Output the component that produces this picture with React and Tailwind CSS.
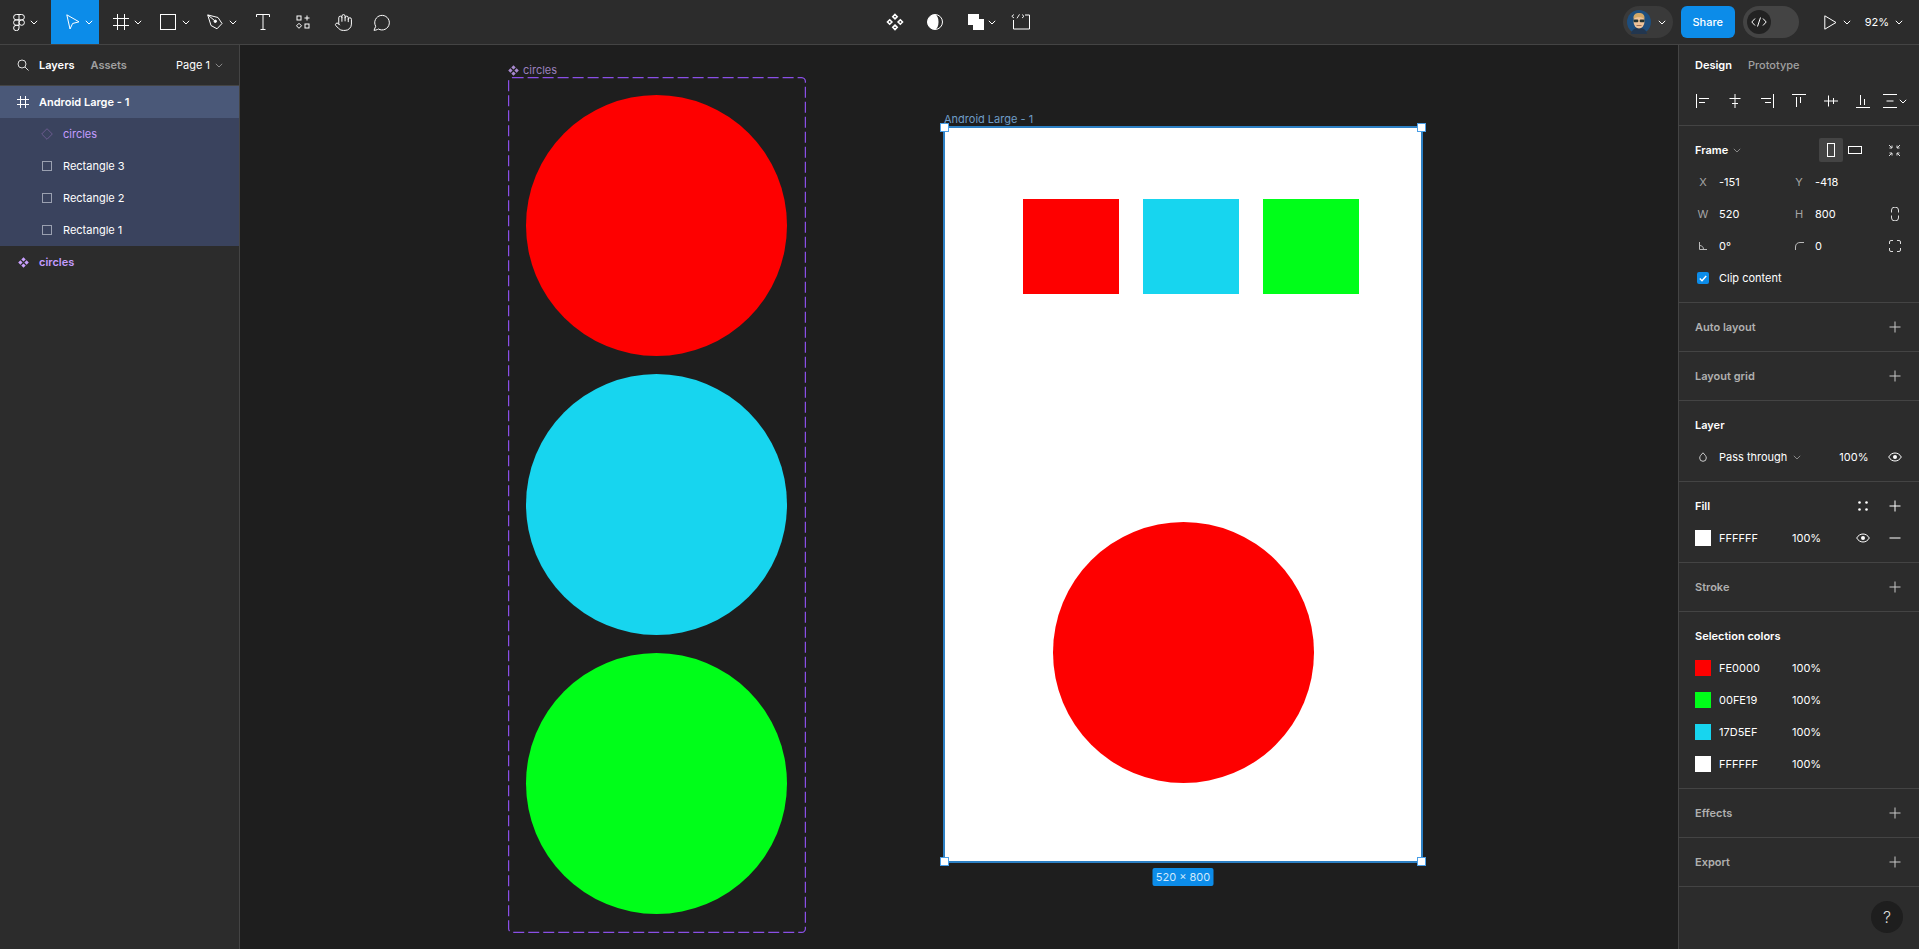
import React from "react";
import { Hand } from "lucide-react";

const Chev = ({ c = "#fff", className = "" }) => (
  <svg width="8" height="5" viewBox="0 0 8 5" fill="none" className={className}>
    <path d="M.8.8 4 4 7.2.8" stroke={c} strokeWidth="1" />
  </svg>
);

const Ico = ({ w = 16, h = 16, children, className = "", vb }) => (
  <svg width={w} height={h} viewBox={vb || `0 0 ${w} ${h}`} fill="none" stroke="#fff" strokeWidth="1" className={`shrink-0 ${className}`}>
    {children}
  </svg>
);

const Plus = ({ dim }) => (
  <Ico w={12} h={12}><path d="M6 .5v11M.5 6h11" stroke={dim ? "#c8c8c8" : "#fff"} /></Ico>
);

const Eye = () => (
  <Ico w={14} h={10}>
    <path d="M.7 5C2.2 2.4 4.4 1 7 1s4.8 1.4 6.3 4C11.8 7.6 9.6 9 7 9S2.200 7.600.7 5Z" />
    <circle cx="7" cy="5" r="2" fill="#fff" stroke="none" />
  </Ico>
);

const Diamonds = ({ c = "#c9a0ff", s = 11 }) => (
  <svg width={s} height={s} viewBox="0 0 11 11" fill={c} className="shrink-0">
    <path d="M5.500.2 7.700 2.400 5.500 4.600 3.300 2.400ZM2.400 3.300 4.600 5.500 2.400 7.700.2 5.500ZM8.600 3.300 10.800 5.500 8.600 7.700 6.400 5.500ZM5.500 6.400 7.700 8.600 5.500 10.800 3.300 8.600Z" />
  </svg>
);

const Tool = ({ w, active, chev, children, ml = "ml-1", pl = "" }) => (
  <div className={`h-[44px] flex items-center justify-center ${w} ${pl} ${active ? "bg-[#0c8ce9]" : ""}`}>
    {children}
    {chev && <Chev className={ml} />}
  </div>
);

function TopBar() {
  return (
    <header className="h-[45px] shrink-0 bg-[#2c2c2c] border-b border-[#444] flex items-center">
      <div className="w-[560px] flex items-center">
        <Tool w="w-[51px]" chev ml="ml-[5px]">
          <Ico w={12} h={17}>
            <path d="M6 .5H3.300a2.700 2.700 0 0 0 0 5.400H6V.5ZM6 .5h2.700a2.700 2.700 0 0 1 0 5.400H6M6 5.900H3.300a2.700 2.700 0 0 0 0 5.400H6V5.900Z" />
            <circle cx="8.700" cy="8.600" r="2.700" />
            <path d="M6 11.300v2.700a2.700 2.700 0 1 1-2.700-2.700H6Z" />
          </Ico>
        </Tool>
        <Tool w="w-[48px]" active chev ml="ml-[5px]" pl="pl-[8px]">
          <Ico w={14} h={16}>
            <path d="M.8.800 13 7.800 6.600 9.500 4 15Z" />
          </Ico>
        </Tool>
        <Tool w="w-[48px]" chev ml="ml-[5px]" pl="pl-[8px]">
          <Ico w={16} h={16}>
            <path d="M4.500 0v16M11.500 0v16M0 4.500h16M0 11.500h16" />
          </Ico>
        </Tool>
        <Tool w="w-[48px]" chev ml="ml-[6px]" pl="pl-[8px]">
          <Ico w={16} h={16}><rect x=".5" y=".5" width="15" height="15" /></Ico>
        </Tool>
        <Tool w="w-[48px]" chev ml="ml-[6px]" pl="pl-[5px]">
          <Ico w={16} h={16}>
            <path d="M.7.900 11 3.500 15 9.500 10 14.800 4 11.500Z" />
            <circle cx="8.300" cy="7.300" r="1.200" fill="#fff" />
            <path d="M.9 1 7.500 6.500" />
          </Ico>
        </Tool>
        <Tool w="w-[40px]">
          <Ico w={14} h={16}><path d="M.5 3V.5h13V3M7 .5v15M4.500 15.500h5" /></Ico>
        </Tool>
        <Tool w="w-[40px]">
          <Ico w={14} h={14}>
            <rect x="1" y="1" width="4" height="4" />
            <path d="M11 .5v5M8.500 3h5" />
            <path d="M3 8.300 5.500 10.800 3 13.300.5 10.800Z" />
            <rect x="9" y="9" width="4" height="4" />
          </Ico>
        </Tool>
        <Tool w="w-[40px]"><Hand size={19} color="#fff" strokeWidth={1.25} /></Tool>
        <Tool w="w-[38px]">
          <Ico w={18} h={17}>
            <path d="M1 16.300 2.700 12.300A7.300 7.300 0 1 1 5.400 15 7.300 7.300 0 0 1 4.500 15.500C3.500 16 2 16.300 1 16.300Z" />
          </Ico>
        </Tool>
      </div>

      <div className="ml-[317px] flex items-center">
        <div className="w-[36px] flex justify-center">
          <svg width="18" height="18" viewBox="0 0 18 18" fill="none" stroke="#fff" strokeWidth="1.600">
            <path d="M9 1.500 11.200 3.700 9 5.900 6.800 3.700ZM3.700 6.800 5.900 9 3.700 11.200 1.500 9ZM14.300 6.800 16.500 9 14.300 11.200 12.100 9ZM9 12.100 11.200 14.300 9 16.500 6.800 14.300Z" />
          </svg>
        </div>
        <div className="w-[39px] flex justify-center ml-[2px]">
          <svg width="16" height="16" viewBox="0 0 16 16" fill="none" stroke="#fff">
            <circle cx="8" cy="8" r="7.500" />
            <path d="M8 .5a7.500 7.500 0 0 0 0 15c2.500-1 3.500-4 3.500-7.500S10.500 1.500 8 .5Z" fill="#fff" stroke="none" />
          </svg>
        </div>
        <div className="ml-[14px] flex items-center">
          <svg width="16" height="16" viewBox="0 0 16 16" fill="#fff">
            <path d="M0 0h11v5h5v11H5v-5H0Z" />
          </svg>
          <Chev className="ml-[4px]" />
        </div>
        <div className="ml-[15px]">
          <svg width="19" height="16" viewBox="0 0 19 16" fill="none" stroke="#fff">
            <path d="M14 1h4.500v14H2.500V6" />
            <path d="M3 .5 .8 2.300 3 4M11 .5 13 2.300 11 4M8.500.3 6 4.300" strokeWidth=".9" />
          </svg>
        </div>
      </div>

      <div className="ml-auto flex items-center h-full">
        <div className="w-[50px] h-[32px] rounded-full bg-[#3a3a3a] flex items-center pl-[4px]">
          <svg width="24" height="24" viewBox="0 0 24 24" className="shrink-0">
            <circle cx="12" cy="12" r="12" fill="#1d4e7e" />
            <path d="M4 24c1-5 4-6 8-6s7 1 8 6Z" fill="#22364f" />
            <ellipse cx="12" cy="11.500" rx="5.500" ry="7" fill="#eec39a" />
            <path d="M6.500 9C6 4 9 3 12 3s6 1 5.500 6C16 6.500 8 6.500 6.500 9Z" fill="#d2a868" />
            <rect x="6.500" y="9.500" width="4.800" height="2.800" rx="1" fill="#233" />
            <rect x="12.700" y="9.500" width="4.800" height="2.800" rx="1" fill="#233" />
            <path d="M9.500 15.500h5" stroke="#8a5a44" strokeWidth=".8" />
          </svg>
          <Chev className="ml-[7px]" />
        </div>
        <button className="ml-[8px] w-[54px] h-[32px] rounded-[6px] bg-[#0c8ce9] text-white text-[11px] font-medium">Share</button>
        <div className="ml-[8px] w-[56px] h-[32px] rounded-full bg-[#444] flex items-center pl-[4px]">
          <div className="w-[24px] h-[24px] rounded-full bg-[#222] flex items-center justify-center">
            <svg width="16" height="10" viewBox="0 0 16 10" fill="none" stroke="#fff">
              <path d="M4 1.500.8 5 4 8.500M12 1.500 15.200 5 12 8.500M9.500.5 6.500 9.500" />
            </svg>
          </div>
        </div>
        <Ico w={13} h={15} className="ml-[25px]"><path d="M.8.800 12 7.500.8 14.200Z" /></Ico>
        <Chev className="ml-[6px]" />
        <span className="ml-[14px] text-white text-[11px]">92%</span>
        <Chev className="ml-[6px] mr-[16px]" />
      </div>
    </header>
  );
}

const LayerRow = ({ icon, label, className = "", text = "text-white", indent, bold }) => (
  <div className={`h-[32px] flex items-center ${indent ? "pl-[41px]" : "pl-[17px]"} ${className}`}>
    <div className="w-[12px] h-[12px] flex items-center justify-center shrink-0">{icon}</div>
    <span className={`ml-[10px] ${text} ${bold ? "font-semibold" : ""}`}>{label}</span>
  </div>
);

const RectIco = () => <Ico w={10} h={10}><rect x=".5" y=".5" width="9" height="9" stroke="#9aa0b0" /></Ico>;

function LeftPanel() {
  return (
    <aside className="w-[240px] shrink-0 bg-[#2c2c2c] border-r border-[#444] text-[11px]">
      <div className="h-[41px] border-b border-[#444] flex items-center pl-[17px] pr-[16px]">
        <Ico w={12} h={12}>
          <circle cx="5" cy="5" r="4" stroke="#ddd" />
          <path d="M8 8l3.500 3.500" stroke="#ddd" />
        </Ico>
        <span className="ml-[10px] text-white font-semibold">Layers</span>
        <span className="ml-[16px] text-[#a0a0a0] font-semibold">Assets</span>
        <span className="ml-auto text-white">Page 1</span>
        <Chev c="#888" className="ml-[5px]" />
      </div>
      <div className="bg-[#3a435e]">
        <LayerRow
          className="bg-[#4a5878]"
          bold
          label="Android Large - 1"
          icon={<Ico w={12} h={12}><path d="M3.500 0v12M8.500 0v12M0 3.500h12M0 8.500h12" /></Ico>}
        />
        <LayerRow
          indent
          label="circles"
          text="text-[#c49cff]"
          icon={<Ico w={12} h={12}><path d="M6 .7 11.300 6 6 11.300.7 6Z" stroke="#6b5b8f" /></Ico>}
        />
        <LayerRow indent label="Rectangle 3" icon={<RectIco />} />
        <LayerRow indent label="Rectangle 2" icon={<RectIco />} />
        <LayerRow indent label="Rectangle 1" icon={<RectIco />} />
      </div>
      <LayerRow label="circles" bold text="text-[#c49cff]" icon={<Diamonds />} />
    </aside>
  );
}

function Section({ h, children }) {
  return <section className={`${h} border-b border-[#444] shrink-0`}>{children}</section>;
}

const EmptySection = ({ title }) => (
  <Section h="h-[49px]">
    <div className="h-full flex items-center justify-between pl-[16px] pr-[18px]">
      <span className="font-semibold text-[#b0b0b0]">{title}</span>
      <Plus dim />
    </div>
  </Section>
);

const Title = ({ children, right }) => (
  <div className="h-[40px] pt-[8px] flex items-center justify-between pl-[16px] pr-[18px]">
    <span className="font-semibold text-white">{children}</span>
    {right}
  </div>
);

const FieldRow = ({ a, av, b, bv, icon }) => (
  <div className="h-[32px] flex items-center pl-[12px]">
    <span className="w-[24px] flex justify-center text-[#a5a5a5]">{a}</span>
    <span className="ml-[4px] w-[68px] text-white">{av}</span>
    <span className="w-[24px] flex justify-center text-[#a5a5a5]">{b}</span>
    <span className="ml-[4px] w-[64px] text-white">{bv}</span>
    <div className="w-[16px] ml-[8px] flex justify-center">{icon}</div>
  </div>
);

const ColorRow = ({ color, name, children }) => (
  <div className="h-[32px] flex items-center pl-[16px] pr-[18px]">
    <div className="w-[16px] h-[16px] shrink-0" style={{ backgroundColor: color }} />
    <span className="ml-[8px] w-[73px] text-white">{name}</span>
    <span className="text-white">100%</span>
    {children}
  </div>
);

const AlignIcon = ({ d }) => (
  <div className="w-[32px] flex justify-center">
    <Ico w={14} h={14}><path d={d} /></Ico>
  </div>
);

function RightPanel() {
  const aligns = [
    "M.5 0v14M3 4.500h10M3 8.500h6",
    "M7 0v14M1.500 4.500h11M4 9.500h6",
    "M13.500 0v14M1 4.500h10M5 8.500h6",
    "M0 .5h14M4.500 3v10M8.500 3v6",
    "M0 7h14M4.500 1.500v11M9.500 4v6",
    "M0 13.500h14M4.500 1v10M8.500 5v6",
  ];
  return (
    <aside className="w-[241px] shrink-0 bg-[#2c2c2c] border-l border-[#444] text-[11px] flex flex-col relative">
      <Section h="h-[81px]">
        <div className="h-[41px] flex items-center pl-[16px]">
          <span className="text-white font-semibold">Design</span>
          <span className="ml-[16px] text-[#a0a0a0] font-medium">Prototype</span>
        </div>
        <div className="h-[30px] flex items-center pl-[8px]">
          {aligns.map((d) => <AlignIcon key={d} d={d} />)}
          <Ico w={14} h={14} className="ml-[4px]"><path d="M0 .5h14M0 13.500h14M3.500 7h7" /></Ico>
          <Chev className="ml-[2px]" />
        </div>
      </Section>
      <Section h="h-[177px]">
        <div className="h-[40px] pt-[8px] flex items-center pl-[16px]">
          <span className="text-white font-semibold">Frame</span>
          <Chev c="#888" className="ml-[5px]" />
          <div className="ml-[78px] w-[24px] h-[24px] rounded-[2px] bg-[#444] flex items-center justify-center">
            <Ico w={8} h={14}><rect x=".5" y=".5" width="7" height="13" /></Ico>
          </div>
          <div className="w-[24px] flex justify-center">
            <Ico w={14} h={8}><rect x=".5" y=".5" width="13" height="7" /></Ico>
          </div>
          <div className="ml-[21px]">
            <Ico w={13} h={13}>
              <path d="M1 1l3 3M4 1.500V4H1.500M12 1 9 4M9 1.500V4h2.500M1 12l3-3M4 11.500V9H1.500M12 12 9 9M9 11.500V9h2.500" stroke="#ddd" />
            </Ico>
          </div>
        </div>
        <FieldRow a="X" av="-151" b="Y" bv="-418" />
        <FieldRow
          a="W"
          av="520"
          b="H"
          bv="800"
          icon={
            <Ico w={8} h={14}>
              <path d="M.5 5.500V3a3 2.500 0 0 1 7 0v2.500M.5 8.500V11a3 2.500 0 0 0 7 0V8.500" stroke="#ddd" />
            </Ico>
          }
        />
        <FieldRow
          a={<Ico w={8} h={8}><path d="M.5 0v7.500H8M.5 3.500c2.500 0 4 1.500 4 4" stroke="#bbb" /></Ico>}
          av="0°"
          b={<Ico w={9} h={8}><path d="M.5 8V5C.5 2 2.500.5 5 .5h4" stroke="#bbb" /></Ico>}
          bv="0"
          icon={
            <Ico w={12} h={12}>
              <path d="M.5 4V2A1.500 1.500 0 0 1 2 .5h2M8 .5h2A1.500 1.500 0 0 1 11.500 2v2M11.500 8v2a1.500 1.500 0 0 1-1.500 1.500H8M4 11.500H2A1.500 1.500 0 0 1 .5 10V8" stroke="#ddd" />
            </Ico>
          }
        />
        <div className="h-[32px] flex items-center pl-[18px]">
          <div className="w-[12px] h-[12px] rounded-[2px] bg-[#0c8ce9] flex items-center justify-center">
            <Ico w={8} h={7}><path d="M.8 3.500 3 5.700 7.200 1" strokeWidth="1.500" /></Ico>
          </div>
          <span className="ml-[10px] text-white">Clip content</span>
        </div>
      </Section>
      <EmptySection title="Auto layout" />
      <EmptySection title="Layout grid" />
      <Section h="h-[81px]">
        <Title>Layer</Title>
        <div className="h-[32px] flex items-center pl-[20px] pr-[17px]">
          <Ico w={8} h={10}><path d="M4 .8C2.500 2.500.7 4 .7 6a3.300 3.300 0 0 0 6.600 0C7.300 4 5.500 2.500 4 .8Z" stroke="#ccc" /></Ico>
          <span className="ml-[12px] text-white">Pass through</span>
          <Chev c="#888" className="ml-[6px]" />
          <span className="ml-[38px] text-white">100%</span>
          <div className="ml-auto"><Eye /></div>
        </div>
      </Section>
      <Section h="h-[81px]">
        <Title
          right={
            <div className="flex items-center">
              <svg width="10" height="10" viewBox="0 0 10 10" fill="#fff">
                <circle cx="1.500" cy="1.500" r="1.300" /><circle cx="8.500" cy="1.500" r="1.300" />
                <circle cx="1.500" cy="8.500" r="1.300" /><circle cx="8.500" cy="8.500" r="1.300" />
              </svg>
              <div className="ml-[21px]"><Plus /></div>
            </div>
          }
        >
          Fill
        </Title>
        <ColorRow color="#ffffff" name="FFFFFF">
          <div className="ml-auto flex items-center">
            <Eye />
            <Ico w={12} h={2} className="ml-[19px]"><path d="M.5 1h11" /></Ico>
          </div>
        </ColorRow>
      </Section>
      <EmptySection title="Stroke" />
      <Section h="h-[177px]">
        <Title>Selection colors</Title>
        <ColorRow color="#fe0000" name="FE0000" />
        <ColorRow color="#00fe19" name="00FE19" />
        <ColorRow color="#17d5ef" name="17D5EF" />
        <ColorRow color="#ffffff" name="FFFFFF" />
      </Section>
      <EmptySection title="Effects" />
      <EmptySection title="Export" />
      <div className="absolute right-[16px] bottom-[16px] w-[32px] h-[32px] rounded-full bg-[#1e1e1e] flex items-center justify-center text-[#ddd] text-[16px] font-light">?</div>
    </aside>
  );
}

const Handle = ({ className }) => (
  <div className={`absolute w-[9px] h-[9px] bg-white border-[1.5px] border-[#4a9ee6] ${className}`} />
);

function Canvas() {
  return (
    <main className="flex-1 relative overflow-hidden bg-[#1e1e1e] text-[11px]">
      {/* component set on the free canvas */}
      <div className="absolute left-[268px] top-[17px] flex items-center gap-[4px] text-[#9a80bd]">
        <Diamonds c="#a98ad0" s={11} />
        <span>circles</span>
      </div>
      <div className="absolute left-[268px] top-[32px] w-[298px] h-[856px] flex flex-col items-center pt-[18px] pr-[2px] gap-[18px]">
        <svg width="298" height="856" className="absolute inset-0" fill="none">
          <rect x=".6" y=".6" width="296.800" height="854.800" rx="4" stroke="#8a4fe6" strokeWidth="1.250" strokeDasharray="11 4" />
        </svg>
        <div className="w-[261px] h-[261px] rounded-full bg-[#fe0000]" />
        <div className="w-[261px] h-[261px] rounded-full bg-[#17d5ef]" />
        <div className="w-[261px] h-[261px] rounded-full bg-[#00fe19]" />
      </div>

      {/* frame on the free canvas */}
      <div className="absolute left-[704px] top-[69px] text-[#6e9cc6] leading-[11px]">Android Large - 1</div>
      <div className="absolute left-[703px] top-[81px] w-[480px] h-[737px] bg-white border-2 border-[#2d80c4]">
        <div className="flex gap-[24px] pt-[71px] pl-[78px]">
          <div className="w-[96px] h-[95px] bg-[#fe0000]" />
          <div className="w-[96px] h-[95px] bg-[#17d5ef]" />
          <div className="w-[96px] h-[95px] bg-[#00fe19]" />
        </div>
        <div className="w-[261px] h-[261px] rounded-full bg-[#fe0000] mt-[228px] ml-[108px]" />
        <Handle className="-left-[5px] -top-[5px]" />
        <Handle className="-right-[5px] -top-[5px]" />
        <Handle className="-left-[5px] -bottom-[5px]" />
        <Handle className="-right-[5px] -bottom-[5px]" />
        <div className="absolute left-1/2 -translate-x-1/2 -bottom-[25px] h-[18px] w-[61px] rounded-[2px] bg-[#0c8ce9] text-[#cfe8fb] flex items-center justify-center whitespace-nowrap">
          520 × 800
        </div>
      </div>
    </main>
  );
}

export default function App() {
  return (
    <div className="w-[1919px] h-[949px] overflow-hidden flex flex-col" style={{ fontFamily: "Inter, 'Liberation Sans', sans-serif" }}>
      <TopBar />
      <div className="flex-1 flex min-h-0">
        <LeftPanel />
        <Canvas />
        <RightPanel />
      </div>
    </div>
  );
}
